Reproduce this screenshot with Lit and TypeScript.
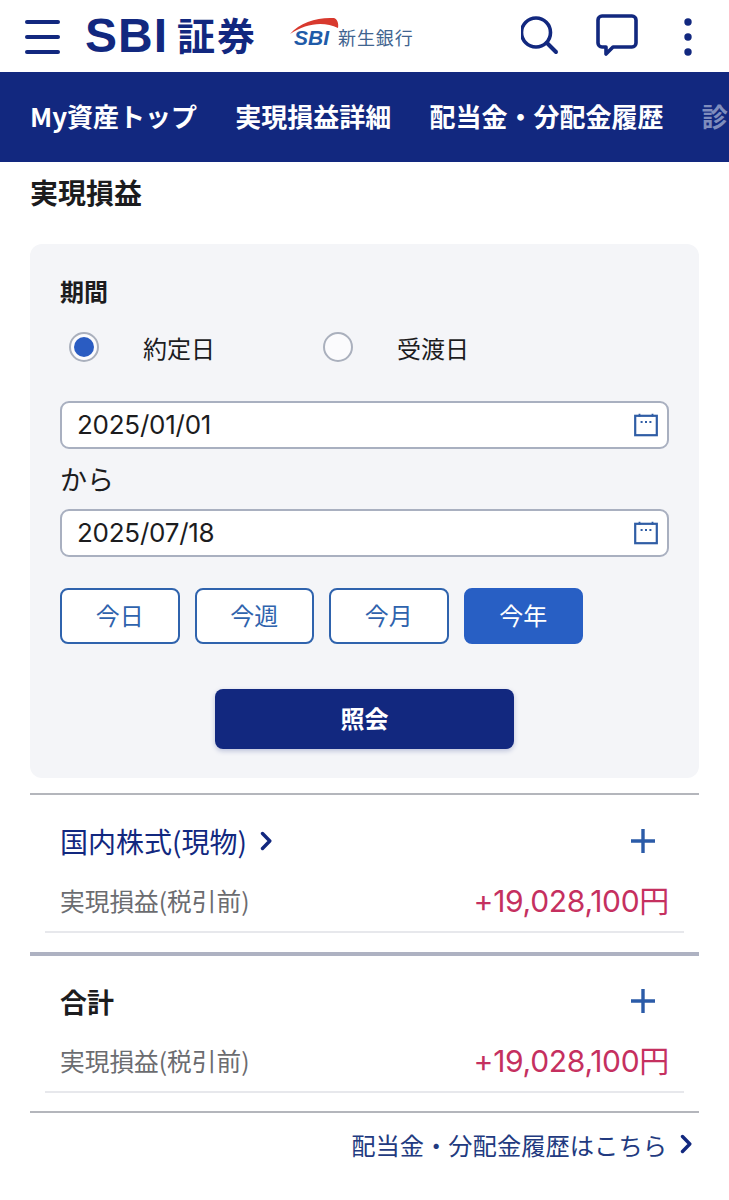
import { LitElement, html, css, svg } from "lit";
import { customElement } from "lit/decorators.js";

const NAVY = "#12287f";

const calendar = html`<svg class="cal" viewBox="0 0 24 24" width="24" height="24" fill="none" stroke="#2f5da5">
  <rect x="1.2" y="2.8" width="21.6" height="19.4" stroke-width="2.2"/>
  <path d="M5.5 .8v3M18.5 .8v3" stroke-width="1.8"/>
  <path d="M6.6 9h2M11 9h2M15.4 9h2" stroke-width="2.2"/>
</svg>`;

const chevron = html`<svg class="chev" viewBox="0 0 12 20" width="12" height="20" fill="none" stroke="${NAVY}" stroke-width="3.4" stroke-linecap="round" stroke-linejoin="round"><path d="M2.5 2.5 9.8 10 2.5 17.5"/></svg>`;

const plus = html`<svg viewBox="0 0 24 24" width="24" height="24" fill="none" stroke="#2b5ba8" stroke-width="3.4"><path d="M12 0v24M0 12h24"/></svg>`;

@customElement("app-root")
export class AppRoot extends LitElement {
  static styles = css`
    :host {
      display: block;
      width: 729px;
      height: 1200px;
      overflow: hidden;
      background: #fff;
      font-family: "Noto Sans CJK JP", "Liberation Sans", sans-serif;
      color: #1c1c1e;
      --navy: #12287f;
    }
    * { box-sizing: border-box; }
    .top {
      height: 72px;
      display: flex;
      align-items: center;
      padding-left: 25px;
    }
    .burger { display: flex; flex-direction: column; gap: 11px; width: 35px; margin-top: 2px; }
    .burger i { display: block; height: 4px; border-radius: 2px; background: var(--navy); }
    .sbi {
      margin-left: 25px;
      font: 700 48px/1 "Liberation Sans", "Noto Sans CJK JP", sans-serif;
      letter-spacing: 1px;
      color: var(--navy);
      white-space: nowrap;
      width: 180px;
      display: flex;
      align-items: center;
    }
    .sbi span { font-family: "Noto Sans CJK JP", sans-serif; font-size: 38px; letter-spacing: 2px; margin: -4px 0 0 9px; }
    .bank { position: relative; margin-left: 25px; width: 126px; height: 40px; display: flex; align-items: center; padding-top: 2px; }
    .bank svg { position: absolute; left: 0; top: 0; }
    .bank b { font: italic 700 21px/1 "Liberation Sans", sans-serif; color: #1f5ba8; margin-left: 4px; }
    .bank span { font-size: 18px; line-height: 1; color: #41648f; margin-left: 9px; letter-spacing: .9px; white-space: nowrap; }
    .icons { margin-left: auto; padding-right: 36px; display: flex; align-items: center; }
    .nav {
      height: 90px;
      background: var(--navy);
      display: flex;
      align-items: center;
      gap: 38.2px;
      padding: 0 0 4px 30px;
      overflow: hidden;
      white-space: nowrap;
      color: #fff;
      font-size: 26px;
      font-weight: 700;
    }
    .nav .fade { color: #7f8dbd; }
    h1 { margin: 12px 0 0 30px; font-size: 28px; line-height: 36px; font-weight: 700; height: 70px; }
    .panel {
      margin: 0 30px;
      height: 534px;
      background: #f4f5f8;
      border-radius: 12px;
      padding: 31px 30px 0;
    }
    .label { font-size: 24px; font-weight: 700; line-height: 32px; }
    .radios { display: flex; margin-top: 17px; height: 46px; align-items: center; padding-left: 9px; font-size: 24px; }
    .radio {
      width: 30px; height: 30px; border-radius: 50%;
      border: 2px solid #aab0bd; background: #fbfbfd;
      display: flex; align-items: center; justify-content: center;
    }
    .radio.on::after { content: ""; width: 20px; height: 20px; border-radius: 50%; background: #2a5cc2; }
    .radio-label { margin-left: 44px; width: 180px; }
    .input {
      height: 48px;
      background: #fff;
      border: 2px solid #a9b0c0;
      border-radius: 9px;
      display: flex;
      align-items: center;
      justify-content: space-between;
      padding: 0 9px 0 15px;
      font: 26px/1 "Inter", "Liberation Sans", sans-serif;
      letter-spacing: -.25px;
    }
    .first { margin-top: 31px; }
    .kara { font-size: 27px; line-height: 60px; height: 60px; }
    .quick { display: flex; gap: 15px; margin-top: 31px; }
    .quick div {
      width: 119.5px; height: 56px;
      border: 2px solid #2f63ad; border-radius: 8px;
      background: #fff; color: #2f63ad;
      display: flex; align-items: center; justify-content: center;
      font-size: 24px;
      padding-bottom: 3px;
    }
    .quick div.on { background: #285fc4; border-color: #285fc4; color: #fff; }
    .go {
      margin: 45px auto 0;
      width: 299px; height: 60px;
      background: var(--navy);
      border-radius: 8px;
      color: #fff;
      font-size: 24px;
      font-weight: 700;
      display: flex; align-items: center; justify-content: center;
      padding-bottom: 4px;
      box-shadow: 0 2px 5px rgba(18, 40, 127, .25);
    }
    .section { margin: 0 30px; }
    .s1 { margin-top: 15px; border-top: 2px solid #b4b6bc; height: 159px; padding-top: 24px; }
    .s2 { border-top: 4px solid #aeb2c2; height: 159px; padding-top: 23px; }
    .head { display: flex; align-items: center; justify-content: space-between; padding: 0 44px 0 30px; height: 44px; }
    .head a { font-size: 28px; color: var(--navy); display: flex; align-items: center; gap: 13px; }
    .head strong { font-size: 27px; font-weight: 700; }
    .row {
      margin: 15px 15px 0;
      padding: 0 15px 10px;
      height: 55px;
      border-bottom: 2px solid #e7e8ec;
      display: flex; justify-content: space-between; align-items: center;
    }
    .row span { font-size: 24.7px; color: #6b6c70; }
    .row em { font: normal 30px/1 "Inter", "Liberation Sans", "Noto Sans CJK JP", sans-serif; color: #c5305f; letter-spacing: -.3px; margin-top: 2px; }
    .foot {
      margin: 0 30px;
      border-top: 2px solid #b4b6bc;
      height: 70px;
      display: flex; justify-content: flex-end; align-items: center; gap: 13px;
      padding: 0 7px 6px 0;
      color: #223a80;
      font-size: 24.3px;
    }
  `;

  private row() {
    return html`<div class="row"><span>実現損益(税引前)</span><em>+19,028,100円</em></div>`;
  }

  render() {
    return html`
      <div class="top">
        <div class="burger"><i></i><i></i><i></i></div>
        <div class="sbi">SBI<span>証券</span></div>
        <div class="bank">
          <svg width="56" height="24" viewBox="0 0 56 24">${svg`<path d="M0 18C10 6 28 1 44 2c3 1 5 5 4 10C34 5 16 7 0 18Z" fill="#d8392e"/>`}</svg>
          <b>SBI</b><span>新生銀行</span>
        </div>
        <div class="icons">
          <svg width="172" height="72" viewBox="0 0 172 72" fill="none" stroke="${NAVY}" stroke-width="3.6" stroke-linecap="round" stroke-linejoin="round">
            <circle cx="15" cy="32.5" r="14.5"/>
            <path d="M26 43 35 52" stroke-width="4"/>
            <path d="M81 16h30a4 4 0 0 1 4 4v23a4 4 0 0 1-4 4H92l-7 7v-7h-4a4 4 0 0 1-4-4V20a4 4 0 0 1 4-4Z"/>
            <circle cx="167" cy="22" r="3.7" fill="${NAVY}" stroke="none"/>
            <circle cx="167" cy="37" r="3.7" fill="${NAVY}" stroke="none"/>
            <circle cx="167" cy="52" r="3.7" fill="${NAVY}" stroke="none"/>
          </svg>
        </div>
      </div>
      <nav class="nav">
        <span>My資産トップ</span><span>実現損益詳細</span><span>配当金・分配金履歴</span><span class="fade">診断</span>
      </nav>
      <h1>実現損益</h1>
      <div class="panel">
        <div class="label">期間</div>
        <div class="radios">
          <div class="radio on"></div><div class="radio-label">約定日</div>
          <div class="radio"></div><div class="radio-label">受渡日</div>
        </div>
        <div class="input first">2025/01/01${calendar}</div>
        <div class="kara">から</div>
        <div class="input">2025/07/18${calendar}</div>
        <div class="quick">
          <div>今日</div><div>今週</div><div>今月</div><div class="on">今年</div>
        </div>
        <div class="go">照会</div>
      </div>
      <div class="section s1">
        <div class="head"><a>国内株式(現物)${chevron}</a>${plus}</div>
        ${this.row()}
      </div>
      <div class="section s2">
        <div class="head"><strong>合計</strong>${plus}</div>
        ${this.row()}
      </div>
      <div class="foot">配当金・分配金履歴はこちら${chevron}</div>
    `;
  }
}
